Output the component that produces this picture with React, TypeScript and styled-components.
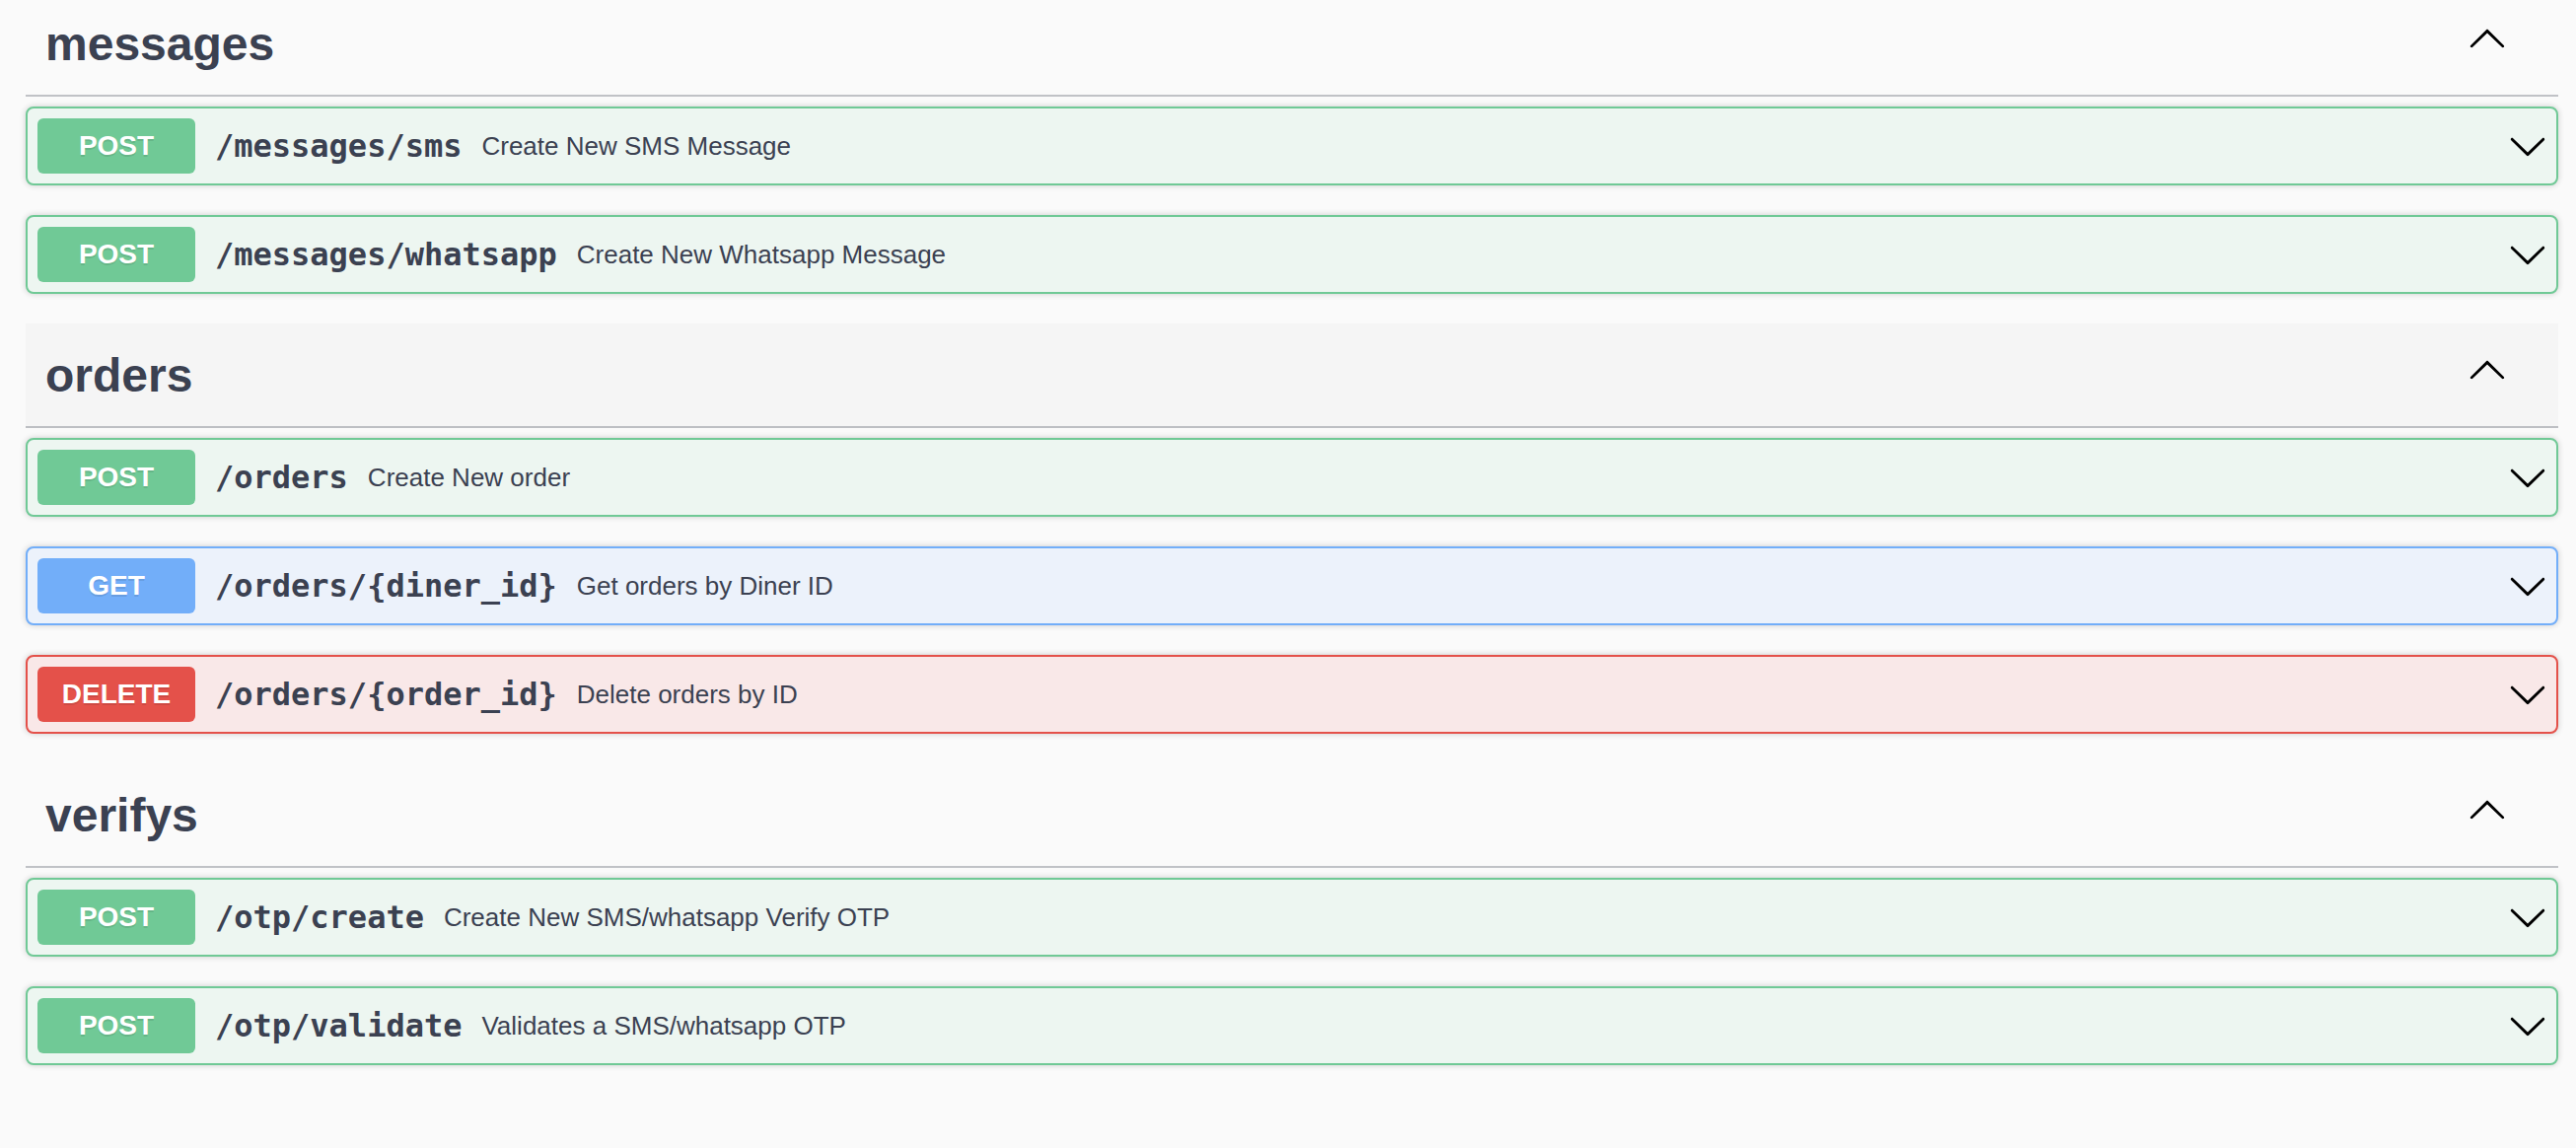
import React from "react";
import styled, { createGlobalStyle } from "styled-components";

const GlobalStyle = createGlobalStyle`
  html, body {
    margin: 0;
    padding: 0;
    background: #fafafa;
    font-family: "Liberation Sans", Arial, sans-serif;
    color: #3b4151;
    overflow: hidden;
  }
`;

type Method = "POST" | "GET" | "DELETE";

const palette: Record<Method, { main: string; bg: string }> = {
  POST: { main: "#70c996", bg: "#edf6f1" },
  GET: { main: "#72aef9", bg: "#ecf2fb" },
  DELETE: { main: "#e4514a", bg: "#f9e8e8" },
};

const Page = styled.div`
  display: flex;
  flex-direction: column;
  padding: 0 18px 0 26px;
  margin-top: -8px;
`;

const TagSection = styled.section`
  display: flex;
  flex-direction: column;
`;

const TagHeader = styled.div<{ $hover?: boolean }>`
  display: flex;
  align-items: center;
  box-sizing: border-box;
  height: 106px;
  padding: 0 52px 0 20px;
  margin: 0 0 10px;
  border-bottom: 2px solid rgba(59, 65, 81, 0.3);
  background: ${(p) => (p.$hover ? "#f5f5f5" : "transparent")};
  cursor: pointer;
`;

const TagTitle = styled.h3`
  flex: 1;
  margin: 1px 0 0;
  font-family: "Liberation Sans", Arial, sans-serif;
  font-size: 48px;
  line-height: 1;
  font-weight: 700;
  color: #3b4151;
`;

const CollapseIcon = styled.svg`
  width: 40px;
  height: 40px;
  margin-bottom: 12px;
  flex: none;
`;

const OpBlock = styled.div<{ $method: Method }>`
  display: flex;
  align-items: center;
  box-sizing: border-box;
  height: 80px;
  padding: 0 9px 0 10px;
  margin: 0 0 30px;
  border: 2px solid ${(p) => palette[p.$method].main};
  border-radius: 8px;
  background: ${(p) => palette[p.$method].bg};
  box-shadow: 0 0 6px rgba(0, 0, 0, 0.19);
  cursor: pointer;
`;

const MethodBadge = styled.span<{ $method: Method }>`
  display: flex;
  align-items: center;
  justify-content: center;
  flex: none;
  width: 160px;
  height: 56px;
  border-radius: 6px;
  background: ${(p) => palette[p.$method].main};
  color: #fff;
  font-family: "Liberation Sans", Arial, sans-serif;
  font-size: 28px;
  font-weight: 700;
  text-shadow: 0 2px 0 rgba(0, 0, 0, 0.1);
`;

const OpPath = styled.span`
  flex: none;
  padding: 0 20px;
  font-family: "DejaVu Sans Mono", "Liberation Mono", monospace;
  font-size: 32px;
  font-weight: 600;
  color: #3b4151;
`;

const OpSummary = styled.span`
  flex: 1;
  font-family: "Liberation Sans", Arial, sans-serif;
  font-size: 26px;
  color: #3b4151;
`;

const ExpandIcon = styled.svg`
  width: 40px;
  height: 40px;
  flex: none;
`;

const ArrowUp = () => (
  <CollapseIcon viewBox="0 0 20 20" aria-hidden="true">
    <path
      fill="#000"
      d="M17.418 14.908c.272.268.709.268.979 0s.271-.701 0-.969l-7.908-7.83c-.27-.268-.707-.268-.979 0l-7.908 7.83c-.27.268-.27.701 0 .969.271.268.709.268.979 0L10 7.767l7.418 7.141z"
    />
  </CollapseIcon>
);

const ArrowDown = () => (
  <ExpandIcon viewBox="0 0 20 20" aria-hidden="true">
    <path
      fill="#000"
      d="M17.418 6.109c.272-.268.709-.268.979 0s.271.701 0 .969l-7.908 7.83c-.27.268-.707.268-.979 0l-7.908-7.83c-.27-.268-.27-.701 0-.969.271-.268.709-.268.979 0L10 13.25l7.418-7.141z"
    />
  </ExpandIcon>
);

type Op = { method: Method; path: string; summary: string };
type Tag = { name: string; hover?: boolean; ops: Op[] };

const tags: Tag[] = [
  {
    name: "messages",
    ops: [
      { method: "POST", path: "/messages/sms", summary: "Create New SMS Message" },
      { method: "POST", path: "/messages/whatsapp", summary: "Create New Whatsapp Message" },
    ],
  },
  {
    name: "orders",
    hover: true,
    ops: [
      { method: "POST", path: "/orders", summary: "Create New order" },
      { method: "GET", path: "/orders/{diner_id}", summary: "Get orders by Diner ID" },
      { method: "DELETE", path: "/orders/{order_id}", summary: "Delete orders by ID" },
    ],
  },
  {
    name: "verifys",
    ops: [
      { method: "POST", path: "/otp/create", summary: "Create New SMS/whatsapp Verify OTP" },
      { method: "POST", path: "/otp/validate", summary: "Validates a SMS/whatsapp OTP" },
    ],
  },
];

export default function App() {
  return (
    <>
      <GlobalStyle />
      <Page>
        {tags.map((tag) => (
          <TagSection key={tag.name}>
            <TagHeader $hover={tag.hover}>
              <TagTitle>{tag.name}</TagTitle>
              <ArrowUp />
            </TagHeader>
            {tag.ops.map((op) => (
              <OpBlock key={op.method + op.path} $method={op.method}>
                <MethodBadge $method={op.method}>{op.method}</MethodBadge>
                <OpPath>{op.path}</OpPath>
                <OpSummary>{op.summary}</OpSummary>
                <ArrowDown />
              </OpBlock>
            ))}
          </TagSection>
        ))}
      </Page>
    </>
  );
}
